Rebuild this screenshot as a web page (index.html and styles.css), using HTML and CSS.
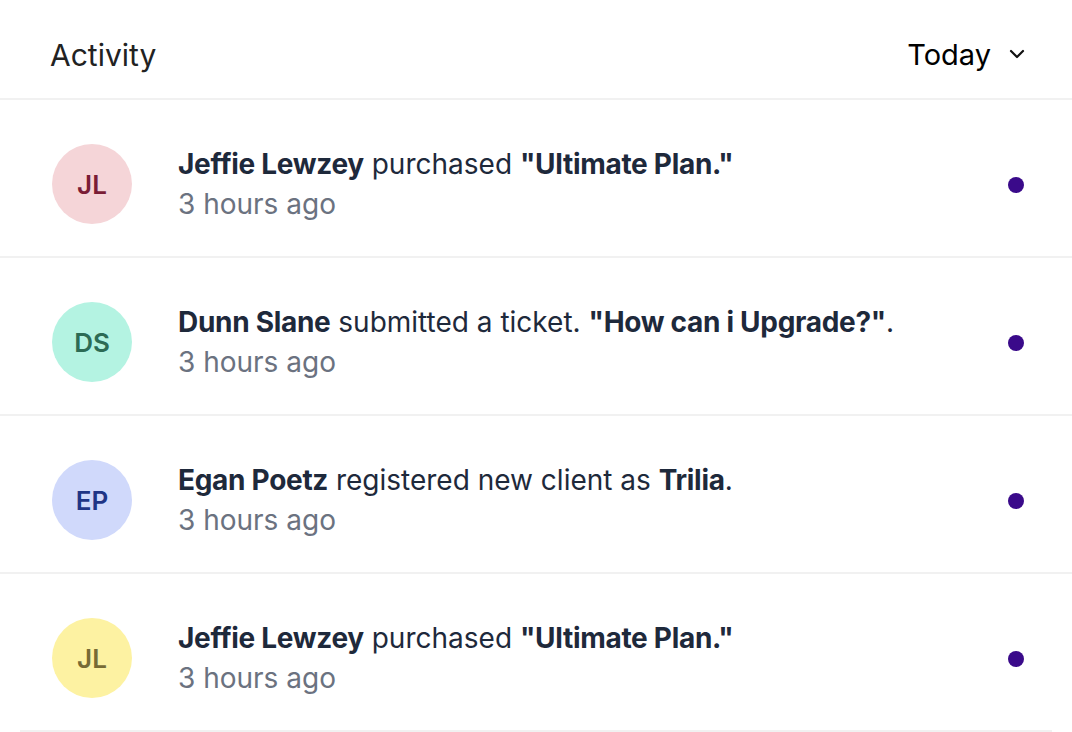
FILE: index.html
```html
<!DOCTYPE html>
<html>
<head>
<meta charset="utf-8">
<link rel="stylesheet" href="styles.css">
</head>
<body>
<div class="card">
  <div class="header">
    <div class="title">Activity</div>
    <div class="filter">Today
      <svg class="chev" width="18" height="18" viewBox="0 0 18 18"><path d="M3 6 L9 12 L15 6" fill="none" stroke="#111" stroke-width="2.2" stroke-linecap="round" stroke-linejoin="round"/></svg>
    </div>
  </div>
  <div class="row">
    <div class="avatar av-pink">JL</div>
    <div class="body">
      <div class="line"><b>Jeffie Lewzey</b> purchased <b>"Ultimate Plan."</b></div>
      <div class="time">3 hours ago</div>
    </div>
    <div class="dot"></div>
  </div>
  <div class="row">
    <div class="avatar av-teal">DS</div>
    <div class="body">
      <div class="line"><b>Dunn Slane</b> submitted a ticket. <b>"How can i Upgrade?"</b>.</div>
      <div class="time">3 hours ago</div>
    </div>
    <div class="dot"></div>
  </div>
  <div class="row">
    <div class="avatar av-blue">EP</div>
    <div class="body">
      <div class="line"><b>Egan Poetz</b> registered new client as <b>Trilia</b>.</div>
      <div class="time">3 hours ago</div>
    </div>
    <div class="dot"></div>
  </div>
  <div class="row last">
    <div class="avatar av-yellow">JL</div>
    <div class="body">
      <div class="line"><b>Jeffie Lewzey</b> purchased <b>"Ultimate Plan."</b></div>
      <div class="time">3 hours ago</div>
    </div>
    <div class="dot"></div>
  </div>
  <div class="bottom-rule"></div>
</div>
</body>
</html>
```
FILE: styles.css
```css
html, body {
  margin: 0;
  padding: 0;
  background: #fff;
  font-family: Inter, "Noto Sans", sans-serif;
}
.card {
  width: 1072px;
}
.header {
  height: 98px;
  border-bottom: 2px solid #f1f1f1;
  display: flex;
  align-items: center;
  justify-content: space-between;
  padding: 0 46px 0 50px;
}
.title {
  font-size: 30px;
  color: #222;
  padding-top: 12px;
}
.filter {
  font-size: 29px;
  color: #000;
  display: flex;
  align-items: center;
  gap: 17px;
  padding-top: 10px;
}
.chev {
  display: block;
}
.row {
  box-sizing: border-box;
  height: 158px;
  padding: 12px 48px 0 52px;
  border-bottom: 2px solid #f1f1f1;
  display: flex;
  align-items: center;
}
.row.last {
  border-bottom: none;
  height: 156px;
}
.bottom-rule {
  height: 2px;
  margin: 0 20px;
  background: #f1f1f1;
}
.avatar {
  width: 80px;
  height: 80px;
  border-radius: 50%;
  flex: none;
  display: flex;
  align-items: center;
  justify-content: center;
  font-size: 26px;
  font-weight: 600;
}
.av-pink { background: #f5d5d8; color: #7a1d36; }
.av-teal { background: #b4f3e2; color: #2c6b55; }
.av-blue { background: #d0d9fb; color: #1f3586; }
.av-yellow { background: #fdf2a2; color: #776b35; }
.body {
  flex: 1;
  margin-left: 46px;
}
.line {
  font-size: 28px;
  line-height: 40px;
  color: #1e293b;
}
.line b {
  font-weight: 700;
  letter-spacing: -0.3px;
}
.time {
  font-size: 28px;
  line-height: 40px;
  color: #6b7280;
}
.dot {
  width: 16px;
  height: 16px;
  border-radius: 50%;
  background: #3a0a8a;
  flex: none;
  margin-top: 2px;
}
```
